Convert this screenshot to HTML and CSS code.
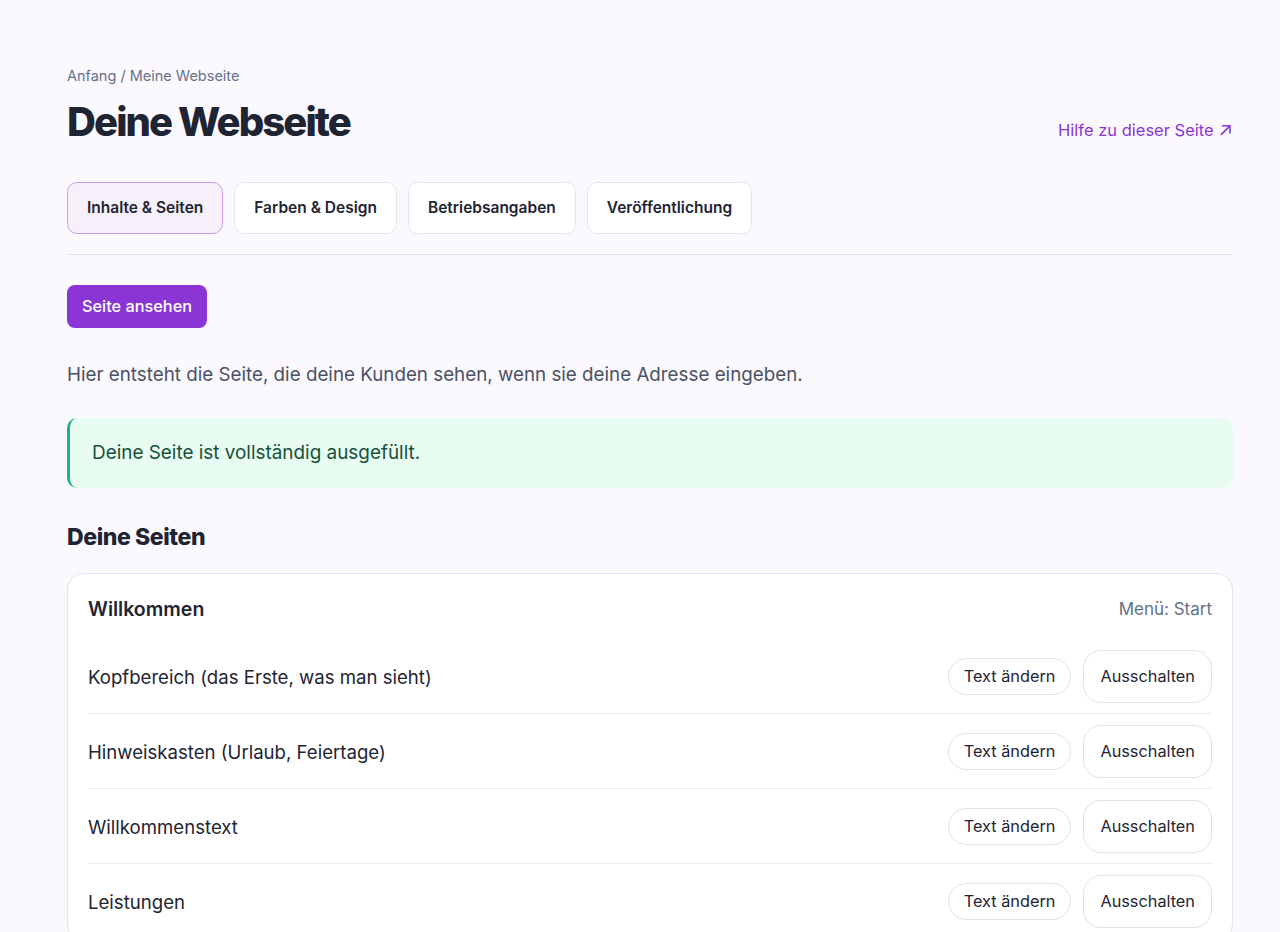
FILE: index.html
```html
<!DOCTYPE html>
<html lang="de">
<head>
<meta charset="utf-8">
<title>Deine Webseite</title>
<link rel="stylesheet" href="styles.css">
</head>
<body>
<div class="page">
  <div class="crumbs">Anfang / Meine Webseite</div>
  <div class="head">
    <h1>Deine Webseite</h1>
    <a class="help" href="#">Hilfe zu dieser Seite <span class="arrow">↗</span></a>
  </div>

  <div class="tabs">
    <a class="tab active" href="#">Inhalte &amp; Seiten</a>
    <a class="tab" href="#">Farben &amp; Design</a>
    <a class="tab" href="#">Betriebsangaben</a>
    <a class="tab" href="#">Veröffentlichung</a>
  </div>

  <a class="btn-primary" href="#">Seite ansehen</a>

  <p class="lead">Hier entsteht die Seite, die deine Kunden sehen, wenn sie deine Adresse eingeben.</p>

  <div class="notice">Deine Seite ist vollständig ausgefüllt.</div>

  <h2>Deine Seiten</h2>

  <div class="card">
    <div class="card-head">
      <span class="card-title">Willkommen</span>
      <span class="card-meta">Menü: Start</span>
    </div>
    <div class="row">
      <span class="row-name">Kopfbereich (das Erste, was man sieht)</span>
      <div class="row-actions">
        <button class="btn-pill">Text ändern</button>
        <button class="btn-ghost">Ausschalten</button>
      </div>
    </div>
    <div class="row">
      <span class="row-name">Hinweiskasten (Urlaub, Feiertage)</span>
      <div class="row-actions">
        <button class="btn-pill">Text ändern</button>
        <button class="btn-ghost">Ausschalten</button>
      </div>
    </div>
    <div class="row">
      <span class="row-name">Willkommenstext</span>
      <div class="row-actions">
        <button class="btn-pill">Text ändern</button>
        <button class="btn-ghost">Ausschalten</button>
      </div>
    </div>
    <div class="row">
      <span class="row-name">Leistungen</span>
      <div class="row-actions">
        <button class="btn-pill">Text ändern</button>
        <button class="btn-ghost">Ausschalten</button>
      </div>
    </div>
  </div>
</div>
</body>
</html>
```

FILE: styles.css
```css
*{
	padding: 0;
	margin: 0;
	box-sizing: border-box;
}
body{
	background: #fbf9fe;
	font-family: Inter, "Noto Sans", sans-serif;
	color: #1f2433;
}
a{
	text-decoration: none;
}
.page{
	padding: 66px 47px 0 67px;
}
.crumbs{
	font-size: 14.5px;
	line-height: 20px;
	color: #64708a;
}
.head{
	display: flex;
	justify-content: space-between;
	align-items: flex-end;
	margin-top: 12px;
}
h1{
	font-size: 40px;
	line-height: 48px;
	font-weight: 800;
	letter-spacing: -1.9px;
	color: #1f2433;
}
.help{
	font-size: 16.5px;
	line-height: 20px;
	color: #8b35d6;
	margin-bottom: 6px;
}
.help .arrow{
	font-size: 19px;
}
.tabs{
	display: flex;
	gap: 11px;
	margin-top: 36px;
	padding-bottom: 20px;
	border-bottom: 1px solid #e5e3ea;
}
.tab{
	display: block;
	padding: 15px 19px;
	font-size: 15.5px;
	line-height: 20px;
	font-weight: 600;
	color: #1f2433;
	background: #fff;
	border: 1px solid #e8e4ee;
	border-radius: 10px;
}
.tab.active{
	background: #f6f0fb;
	border-color: #c99ee4;
}
.btn-primary{
	display: inline-block;
	margin-top: 30px;
	padding: 11px 15px;
	font-size: 16.3px;
	line-height: 21px;
	font-weight: 500;
	color: #fff;
	background: #8b35d6;
	border-radius: 8px;
}
.lead{
	margin-top: 33px;
	font-size: 18.8px;
	line-height: 28px;
	color: #4a5266;
}
.notice{
	margin-top: 29px;
	padding: 21px 22px;
	font-size: 18.9px;
	line-height: 28px;
	color: #17503a;
	background: #e8fcf2;
	border-left: 3px solid #1fb37f;
	border-radius: 10px;
}
h2{
	margin-top: 33px;
	font-size: 23px;
	line-height: 32px;
	font-weight: 800;
	letter-spacing: -0.4px;
}
.card{
	margin-top: 20px;
	padding: 22px 20px 0;
	background: #fff;
	border: 1px solid #e5e3ea;
	border-radius: 16px;
}
.card-head{
	display: flex;
	justify-content: space-between;
	align-items: center;
	margin-bottom: 17px;
}
.card-title{
	font-size: 19.5px;
	line-height: 26px;
	font-weight: 600;
}
.card-meta{
	font-size: 17px;
	color: #64708a;
}
.row{
	display: flex;
	justify-content: space-between;
	align-items: center;
	padding: 11px 0 10px;
	border-bottom: 1px solid #eeecf1;
}
.row-name{
	font-size: 18.6px;
	color: #1f2433;
}
.row-actions{
	display: flex;
	align-items: center;
	gap: 12px;
}
.btn-pill, .btn-ghost{
	font-family: inherit;
	font-size: 16.3px;
	line-height: 21px;
	color: #1f2433;
	background: #fff;
	border: 1px solid #e3e1e8;
	cursor: pointer;
}
.btn-pill{
	padding: 7px 15px;
	border-radius: 20px;
}
.btn-ghost{
	padding: 15px 16px;
	border-radius: 18px;
}
```
